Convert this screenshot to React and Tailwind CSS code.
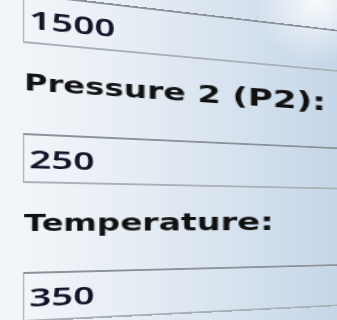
export default function App() {
  const label = "text-[23.5px] leading-[28px] font-bold text-[#111111] ml-[1px] whitespace-nowrap [font-family:'DejaVu_Sans','Verdana',sans-serif] origin-[0px_22px] [transform:matrix3d(1.107,0,0,-0.000886,0,1,0,0,0,0,1,0,0,0,0,1)]";
  const box = "h-[50px] w-[460px] shrink-0 border border-y-2 border-[#aab0b7] border-t-[#8b9199] flex items-center pl-[4px] text-[26px] leading-[30px] text-[#131628] [font-family:'Noto_Sans',sans-serif] font-semibold";
  const val = "inline-block origin-left scale-x-[1.25]";
  return (
    <div className="w-[337px] h-[320px] overflow-hidden relative bg-[linear-gradient(90deg,#f4f7fa_0%,#e6edf4_40%,#d3e0ed_75%,#c6d6e8_100%)]">
      <div className="absolute inset-0 bg-[radial-gradient(ellipse_at_94%_0%,rgba(255,255,255,0.9)_0%,rgba(255,255,255,0)_14%)]" />
      <div className="relative w-[600px] pl-[23px] flex flex-col origin-[23px_223px] [transform:matrix3d(1.22,0,0,0.00062,0,1,0,0,0,0,1,0,0,0,0,1)]">
        <div className={box + " mt-[-7px]"}><span className={val}>1500</span></div>
        <div className={label + " mt-[25px]"}>Pressure 2 (P2):</div>
        <div className={box + " mt-[37px]"}><span className={val}>250</span></div>
        <div className={label + " mt-[26px]"}>Temperature:</div>
        <div className={box + " mt-[35px]"}><span className={val}>350</span></div>
      </div>
    </div>
  );
}
